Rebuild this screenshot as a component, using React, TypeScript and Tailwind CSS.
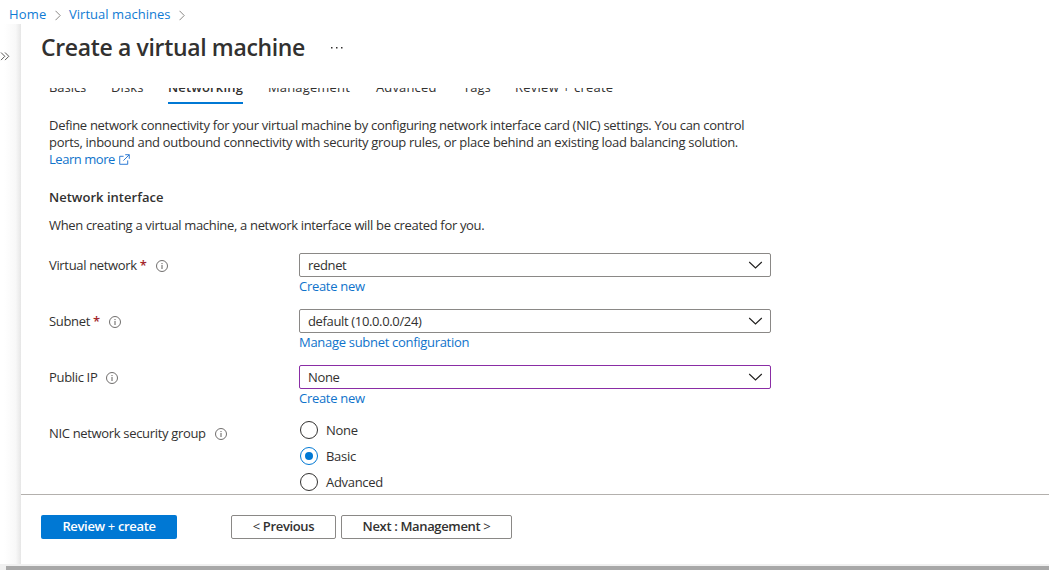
import React from "react";
import clsx from "clsx";

function Info() {
  return (
    <svg width="12" height="12" viewBox="0 0 12 12" fill="none" className="mt-px shrink-0">
      <circle cx="6" cy="6" r="5.5" stroke="#605e5c" strokeWidth="0.9" />
      <path d="M6 5v4M6 3v1.1" stroke="#605e5c" strokeWidth="1" />
    </svg>
  );
}

function Crumb() {
  return (
    <svg width="6" height="11" viewBox="0 0 6 11" fill="none" className="mt-px shrink-0">
      <path d="M0.5 0.8L5.2 5.5L0.5 10.2" stroke="#8a8886" strokeWidth="1" />
    </svg>
  );
}

const tabs = [
  { label: "Basics", cls: "w-[37px] tracking-[-0.05px]" },
  { label: "Disks", cls: "w-[32px] tracking-[0.1px]" },
  { label: "Networking", cls: "w-[75px] font-semibold border-b-2 border-[#0078d4] tracking-[0.15px]" },
  { label: "Management", cls: "w-[83px] tracking-[0.15px]" },
  { label: "Advanced", cls: "w-[62px] tracking-[0.15px]" },
  { label: "Tags", cls: "w-[27px] tracking-[0px]" },
  { label: "Review + create", cls: "w-[99px] tracking-[0.25px]" },
];

function Label({ text, required }: { text: string; required?: boolean }) {
  return (
    <div className="flex h-6 w-[250px] items-center">
      <span className="tracking-[-0.33px]">{text}</span>
      {required && <span className="ml-[3px] font-semibold text-[#a4262c]">*</span>}
      <span className="ml-[9px] flex">
        <Info />
      </span>
    </div>
  );
}

type FieldProps = { label: string; required?: boolean; value: string; link: string; active?: boolean };

function Field({ label, required, value, link, active }: FieldProps) {
  return (
    <div className="flex h-14">
      <Label text={label} required={required} />
      <div className="w-[472px]">
        <div
          className={clsx(
            "flex h-6 items-center justify-between rounded-xs border pr-[7px] pl-2",
            active ? "border-[#8a2da5]" : "border-[#8a8886]",
          )}
        >
          <span className="tracking-[-0.35px]">{value}</span>
          <svg width="15" height="8" viewBox="0 0 15 8" fill="none">
            <path d="M1.2 1L7.5 7L13.8 1" stroke="#201f1e" strokeWidth="1.1" />
          </svg>
        </div>
        <div className="h-5 leading-[19px] tracking-[-0.3px] text-[#0f73cb]">{link}</div>
      </div>
    </div>
  );
}

function Radio({ label, checked }: { label: string; checked?: boolean }) {
  return (
    <div className="flex h-[26px] items-center gap-2">
      <span
        className={clsx(
          "ml-px flex size-[18px] items-center justify-center rounded-full border",
          checked ? "border-[#0078d4]" : "border-[#323130]",
        )}
      >
        {checked && <span className="size-2 rounded-full bg-[#0078d4]" />}
      </span>
      <span>{label}</span>
    </div>
  );
}

export default function App() {
  return (
    <div className="flex h-[570px] w-[1049px] flex-col overflow-hidden bg-white font-['Open_Sans','Noto_Sans',sans-serif] text-[13px] leading-[17px] tracking-[-0.3px] whitespace-nowrap text-[#323130]">
      <nav className="flex h-6 shrink-0 items-center gap-2 pt-1.5 pb-px pl-[9px] tracking-[0.03px] text-[#0f7bd4]">
        <span className="w-[38px] tracking-[0.2px]">Home</span>
        <Crumb />
        <span className="w-[102px]">Virtual machines</span>
        <Crumb />
      </nav>

      <div className="flex h-[540px] shrink-0">
        <aside className="w-[21px] shrink-0 bg-linear-to-r from-white from-20% via-[#f8f8f8] via-75% to-[#e6e6e6] pt-7">
          <svg width="10" height="9" viewBox="0 0 10 9" fill="none">
            <path d="M1 0.5L4.8 4.3L1 8.1M5 0.5L8.8 4.3L5 8.1" stroke="#484644" strokeWidth="0.9" />
          </svg>
        </aside>

        <main className="flex flex-1 flex-col">
          <header className="flex h-16 shrink-0 pl-5">
            <h1 className="w-[290px] pt-[7px] text-[23px] leading-8 font-semibold tracking-[-0.35px]">
              Create a virtual machine
            </h1>
            <svg width="12" height="2" viewBox="0 0 12 2" className="mt-[23px]">
              <path d="M0 0h1.5v1.5H0zM5 0h1.5v1.5H5zM10 0h1.5v1.5H10z" fill="#323130" />
            </svg>
          </header>

          <section className="h-[406px] shrink-0 overflow-hidden pl-7">
            <div className="-mt-2.5 flex h-[26px] gap-[25px]">
              {tabs.map((t) => (
                <div key={t.label} className={clsx("h-[26px] shrink-0 leading-[19px]", t.cls)}>
                  {t.label}
                </div>
              ))}
            </div>

            <p className="mt-[13px]">
              Define network connectivity for your virtual machine by configuring network interface card (NIC) settings. You can control
              <br />
              ports, inbound and outbound connectivity with security group rules, or place behind an existing load balancing solution.
            </p>
            <a className="flex items-center gap-[5px] text-[#0f73cb]">
              <span className="w-[65px] tracking-[-0.45px]">Learn more</span>
              <svg width="11" height="11" viewBox="0 0 12 12" fill="none" stroke="#1a6fd0">
                <path d="M5 2.5H0.8V11.2H9.5V7M6.8 0.8H11.2V5.2M11.2 0.8L4.8 7.2" strokeWidth="1" />
              </svg>
            </a>
            <h2 className="mt-[21px] font-semibold tracking-[0.02px]">Network interface</h2>
            <p className="mt-[11px] mb-[19px] tracking-[-0.33px]">
              When creating a virtual machine, a network interface will be created for you.
            </p>

            <Field label="Virtual network" required value="rednet" link="Create new" />
            <Field label="Subnet" required value="default (10.0.0.0/24)" link="Manage subnet configuration" />
            <Field label="Public IP" value="None" link="Create new" active />
            <div className="flex">
              <Label text="NIC network security group" />
              <div className="-mt-1">
                <Radio label="None" />
                <Radio label="Basic" checked />
                <Radio label="Advanced" />
              </div>
            </div>
          </section>

          <footer className="flex flex-1 items-start border-t border-[#b3b0ad] pt-5 pl-5 font-semibold tracking-[-0.35px] [word-spacing:0.5px]">
            <button className="mr-[54px] h-6 w-[136px] rounded-xs bg-[#0078d4] pb-px text-white">
              Review <span className="font-normal">+</span> create
            </button>
            <button className="mr-[5px] h-6 w-[105px] rounded-xs border border-[#8a8886] pb-px">
              <span className="font-normal">&lt;</span> Previous
            </button>
            <button className="h-6 w-[171px] rounded-xs border border-[#8a8886] pb-px">
              Next : Management <span className="font-normal">&gt;</span>
            </button>
          </footer>
        </main>
      </div>

      <div className="h-1.5 shrink-0 bg-[#f0f0f0] pt-0.5 pl-1.5">
        <div className="h-1 bg-[#a8a8a8]" />
      </div>
    </div>
  );
}
